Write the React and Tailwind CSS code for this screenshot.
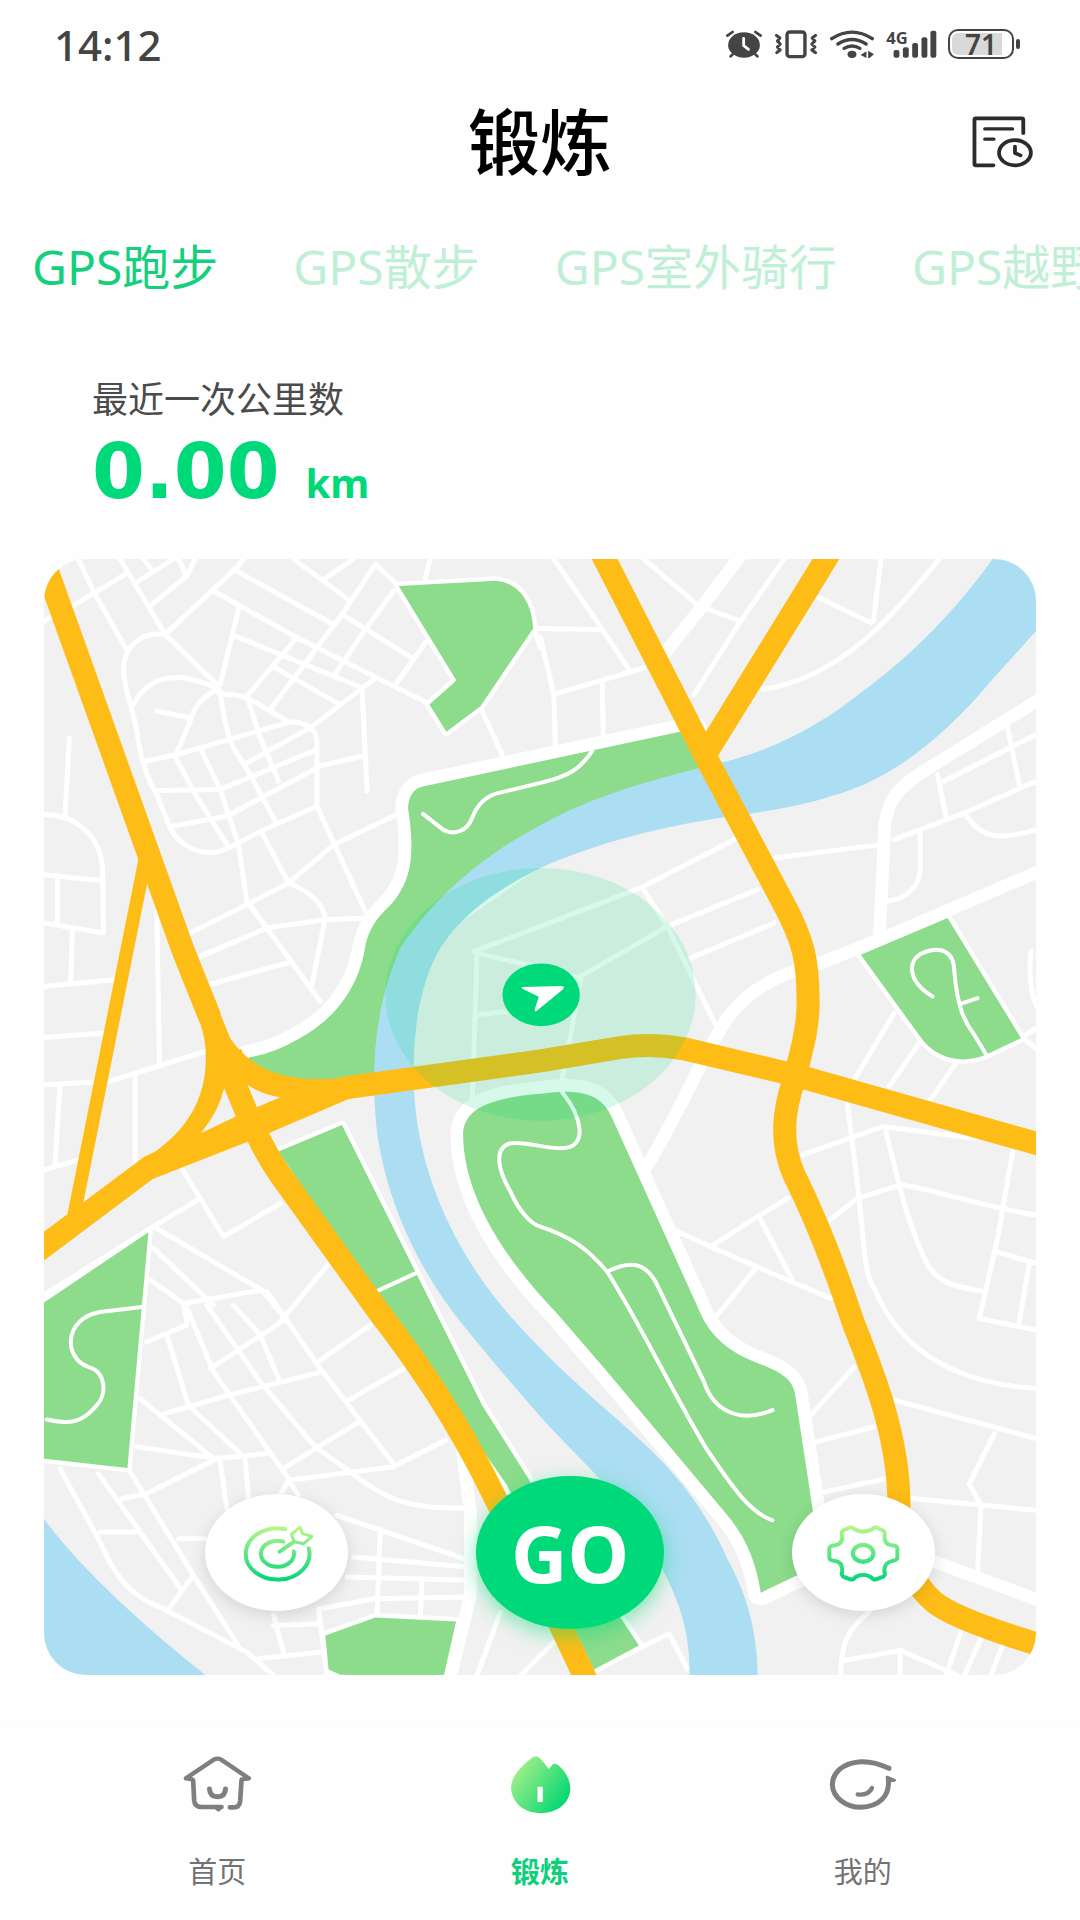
import React, { useState } from "react";

const tabs = ["GPS跑步", "GPS散步", "GPS室外骑行", "GPS越野跑"];

const AlarmIcon = () => (
  <svg className="h-[30px] w-[38px]" viewBox="538 86 110 90" preserveAspectRatio="none" aria-hidden="true">
    <ellipse cx="593" cy="134" rx="46" ry="38" fill="#444" />
    <g fill="none" strokeLinecap="round" strokeWidth="8">
      <path stroke="#fff" d="M592 114V136L606 147" />
      <path stroke="#444" d="M545 106L560 95M626 95L641 106M560 162L554 168M626 162L632 168" />
    </g>
  </svg>
);

const VibrateIcon = () => (
  <svg className="h-[30px] w-11" viewBox="678 86 128 90" preserveAspectRatio="none" fill="none" stroke="#444" aria-hidden="true">
    <rect x="716" y="95" width="52" height="74" rx="8" strokeWidth="10" />
    <path
      strokeWidth="9"
      strokeLinejoin="round"
      strokeLinecap="round"
      d="M685 105L695 113L688 122L696 131L688 140L696 149L686 157M799 105L789 113L797 122L788 131L797 140L788 149L799 157"
    />
  </svg>
);

const WifiIcon = () => (
  <svg className="h-[30px] w-[46px]" viewBox="836 86 134 90" preserveAspectRatio="none" aria-hidden="true">
    <g fill="none" stroke="#444" strokeWidth="10" strokeLinecap="round">
      <path d="M844 115Q903 76 962 115" />
      <path d="M862 131Q903 104 944 131" />
      <path d="M880 144Q903 130 926 144" />
    </g>
    <ellipse cx="903" cy="162" rx="13" ry="11" fill="#444" />
    <path fill="#444" d="M928 164L945 153V173ZM950 151L967 162L954 173H950Z" />
  </svg>
);

const SignalIcon = () => (
  <svg className="h-[34px] w-[51px]" viewBox="1002 80 148 102" preserveAspectRatio="none" fill="#444" aria-hidden="true">
    <text x="1003" y="131" fontSize="48" fontWeight="700" fontFamily="'Noto Sans', sans-serif">
      4G
    </text>
    <rect x="1024" y="149" width="17" height="23" rx="6" />
    <rect x="1051" y="141" width="17" height="31" rx="6" />
    <rect x="1078" y="128" width="17" height="44" rx="6" />
    <rect x="1105" y="111" width="17" height="61" rx="6" />
    <rect x="1131" y="91" width="17" height="81" rx="6" />
  </svg>
);

const HistoryIcon = () => (
  <svg
    className="h-[53px] w-[63px]"
    viewBox="0 0 182 160"
    preserveAspectRatio="none"
    fill="none"
    stroke="#2b2b2b"
    strokeWidth="11"
    strokeLinecap="round"
    strokeLinejoin="round"
    aria-hidden="true"
  >
    <path d="M151 55V14Q151 10 146 10H14Q10 10 10 14V148Q10 152 14 152H65" />
    <path d="M40 42H120M40 73H66" strokeWidth="10" />
    <ellipse cx="127" cy="114" rx="46" ry="38" />
    <path d="M127 95V115L143 122" />
  </svg>
);

const TargetIcon = () => (
  <svg className="h-[60px] w-[73px]" viewBox="610 632 220 180" preserveAspectRatio="none" fill="none" aria-hidden="true">
    <defs>
      <linearGradient id="target" gradientUnits="userSpaceOnUse" x1="0" y1="640" x2="0" y2="806">
        <stop offset="0" stopColor="#bdf78c" />
        <stop offset="1" stopColor="#00d67a" />
      </linearGradient>
    </defs>
    <g stroke="url(#target)" strokeWidth="12" strokeLinecap="round" strokeLinejoin="round">
      <path d="M740 650A96 77 0 1 0 811 708" />
      <path d="M735 688A50 39 0 1 0 766 717" />
      <path d="M723 718L767 688" />
      <path d="M767 688L759 666L785 644L792 664L821 672L796 694Z" strokeWidth="9" />
    </g>
  </svg>
);

const GearIcon = () => (
  <svg className="h-[60px] w-[75px]" viewBox="862 636 226 178" preserveAspectRatio="none" fill="none" aria-hidden="true">
    <defs>
      <linearGradient id="gear" gradientUnits="userSpaceOnUse" x1="0" y1="640" x2="0" y2="808">
        <stop offset="0" stopColor="#bdf78c" />
        <stop offset="1" stopColor="#00d67a" />
      </linearGradient>
    </defs>
    <g stroke="url(#gear)" strokeWidth="12" strokeLinejoin="round">
      <path d="M915 657L935 649Q941 647 948 655Q974 668 1000 655Q1008 646 1015 650L1035 659Q1042 664 1038 675Q1038 700 1060 702Q1077 703 1077 712V738Q1077 746 1060 749Q1036 755 1038 780Q1042 790 1035 795L1012 803Q1004 805 998 797Q974 782 950 797Q944 806 935 803L914 795Q907 790 911 780Q912 752 890 749Q872 746 872 738V712Q872 703 890 702Q912 698 911 675Q906 662 915 657Z" />
      <ellipse cx="974" cy="726" rx="31" ry="25" strokeWidth="13" />
    </g>
  </svg>
);

const HomeIcon = () => (
  <svg
    className="h-[59px] w-[71px]"
    viewBox="125 68 212 177"
    fill="none"
    stroke="#7f7f7f"
    strokeWidth="15"
    strokeLinecap="round"
    strokeLinejoin="round"
    aria-hidden="true"
  >
    <path d="M156 141L136 138L220 82Q231 76 242 82L325 138L304 141" strokeWidth="13" />
    <path d="M158 145L161 205Q163 224 185 224H243" strokeWidth="14" />
    <path d="M228 229L234 233L240 228" strokeWidth="9" />
    <path d="M303 145L299 206Q297 225 280 225H268" strokeWidth="14" />
    <path d="M207 170Q208 193 231 193Q254 193 255 170" />
  </svg>
);

const LeafIcon = () => (
  <svg className="h-[59px] w-[61px]" viewBox="1105 68 184 177" aria-hidden="true">
    <defs>
      <linearGradient id="leaf" x1="0" y1="0.2" x2="0.9" y2="0.8">
        <stop offset="0" stopColor="#aef08a" />
        <stop offset="1" stopColor="#06d873" />
      </linearGradient>
    </defs>
    <path
      fill="url(#leaf)"
      d="M1170 77Q1182 66 1195 77Q1210 92 1222 110L1232 98Q1240 90 1250 98Q1287 130 1287 170C1285 215 1245 243 1197 243C1145 243 1110 210 1108 165C1110 130 1140 100 1170 77Z"
    />
    <rect x="1188" y="163" width="16" height="46" rx="2" fill="#fff" />
  </svg>
);

const FaceIcon = () => (
  <svg
    className="h-[55px] w-[70px]"
    viewBox="620 72 210 165"
    fill="none"
    stroke="#7f7f7f"
    strokeWidth="15"
    strokeLinecap="round"
    strokeLinejoin="round"
    aria-hidden="true"
  >
    <path d="M803 106C770 90 742 85 718 86C662 90 633 120 633 156C635 195 675 223 718 223C772 221 806 190 801 140" />
    <path d="M797 132L820 142L802 144Z" strokeWidth="8" fill="#7f7f7f" />
    <path d="M709 184C732 187 745 180 752 165" strokeWidth="13" />
  </svg>
);

const CityMap = () => (
  <svg className="block h-full w-full" viewBox="12 24 2973 3345" preserveAspectRatio="none" fill="none" role="img" aria-label="地图">
    <rect x="12" y="24" width="2973" height="3345" fill="#f1f1f1" />

    {/* minor streets, one group per district */}
    <g stroke="#fff" strokeWidth="15" strokeLinejoin="round" strokeLinecap="round">
      <g>
        <path d="M115 24L165 130L262 300M12 210L105 160L255 70M240 24L375 250L535 405M375 250L590 50L610 24" />
        <path d="M375 250C300 240 250 290 250 360C255 420 280 480 290 540C300 620 320 680 350 730L390 830C420 890 480 908 530 902C580 890 620 860 660 840L830 765" />
        <path d="M330 165L440 75L465 24M415 24L440 75M295 90L400 24M310 24L330 50M580 55L870 215M520 120L770 260L1060 405L1170 460" />
        <path d="M595 175L540 400M585 255L720 310L965 410M760 24L930 150M850 85L940 24M1005 40L905 190L830 290L690 475" />
        <path d="M1005 40L1075 105M1060 120L975 235L880 375M905 190L1115 320M1155 275L1070 395M770 260L620 435M705 350L890 455" />
        <path d="M280 460C310 400 360 375 430 380C480 390 510 400 535 415C490 430 460 470 450 510C430 560 415 590 405 615M350 480L450 500" />
        <path d="M535 425L560 430C600 430 620 440 640 450L740 510M540 420C550 500 565 560 580 590L630 670L705 810M625 450L660 560L715 690" />
        <path d="M315 630L410 610L740 515C780 505 830 530 830 570V765L975 1080M1000 385L810 530L620 635M830 595L540 715L355 718M830 650L560 795L395 825" />
        <path d="M405 615L460 720L560 880M485 600L540 715L595 880L620 1050L680 1130L840 1350M835 645L965 615M965 410L975 610L980 720" />
        <path d="M665 845L745 995C830 1030 850 1070 855 1100L815 1300M1070 790L880 880L745 995L620 1060L450 1145M975 1100L855 1105L680 1130L480 1215" />
        <path d="M88 560L75 795M12 790C100 790 190 850 188 970L190 1145L12 1115M12 970L188 988M52 975V1120M97 1140L92 1290M1170 24L1155 80M1325 480L1385 610M1480 230L1500 290" />
      </g>
      <g transform="translate(1500 0)">
        <path d="M-20 232L175 235M40 24L175 220L265 355M0 260L40 430L45 590M40 430L310 350M185 390L188 550M310 24L475 165L600 210" />
        <path d="M730 24L600 210L460 430M835 140L990 215M1020 24L998 210M1195 24C1050 200 900 380 665 415" />
        <path d="M600 855L310 1005L0 1125L-200 1200M305 1010L380 1125L530 1430M650 1015L380 1125L120 1275M700 1115L450 1220M700 920L1020 880" />
        <path d="M1485 550L1210 690M1400 530L1435 700M1190 670L1215 795M1485 690L1270 785L1060 865M1270 785C1320 860 1370 870 1485 835M1138 840V960C1130 1010 1100 1040 1040 1050" />
      </g>
      <g transform="translate(0 1200)">
        <path d="M12 105L220 85M12 258L185 245M12 400L205 390L495 300M60 405L45 640M12 655L115 625M285 370V640M350 -120L358 335M505 100L740 35M470 20L545 -12" />
        <path d="M425 650L480 740L550 855L720 755M480 740L340 825L12 1030M340 825L665 1015L740 1105M430 1055L665 1015M340 890L520 1060M330 985L430 1055L440 1110M720 1110L870 930" />
        <path d="M1310 0L1295 460M1310 190L1400 180M1310 5L1500 50L1620 80" />
      </g>
      <g transform="translate(1500 1200)">
        <path d="M1060 185L940 385M1135 275L1045 405M1245 335L1165 450M1440 260L1485 230M1445 260L1485 290M1470 0Q1460 100 1485 160M120 80L100 200L65 380" />
        <path d="M920 455L955 740C970 880 970 970 1000 1010C1080 1200 1250 1295 1485 1310M785 610L1025 525L1300 560M1035 540L1080 720C1110 830 1140 900 1160 940C1200 1000 1250 1005 1320 1018" />
        <path d="M860 810L950 740L1080 700C1150 705 1300 760 1485 790M1415 600L1370 860L1315 1100L1485 1135M1365 900L1485 935M1465 935L1435 1110" />
        <path d="M400 835L510 885L740 985L870 1040M510 885L650 795L740 740M655 795L755 985M640 955L530 1090" />
      </g>
      <g transform="translate(0 2280)">
        <path d="M320 90L440 40M380 70L445 280M435 -25L520 180L745 500M510 170L740 20M500 -20L660 210L825 405L930 480C1030 560 1100 592 1270 588" />
        <path d="M580 -20L660 70L715 200M375 305L565 250L845 180M680 -60L840 170L1055 450M840 145L990 40M925 265L1090 170M955 330L730 470M745 505L1055 465L1215 385" />
        <path d="M300 260L520 440M455 290L600 425M290 405L530 440L680 425M530 440L320 545L245 560M540 450L560 590M615 445L625 560" />
        <path d="M60 470L180 690C220 780 260 850 370 890L620 1020L700 1090M270 480L320 560L460 790L600 1010M175 485L300 660L425 835M180 660H300M415 680H495M460 790L390 885M745 505L720 550M745 505L775 550" />
        <path d="M890 610L1270 740M940 735L1280 765M920 795L1280 805M1020 650L1010 910M1145 800L1140 910M840 890L1000 860L1280 855M700 910L730 1020M700 940L840 935M655 1040L845 1020M835 890L860 1090" />
        <path d="M1380 900L1310 1090M1540 990L1440 1090" />
      </g>
      <g transform="translate(1500 2280)">
        <path d="M940 165L810 310M825 390L1000 345M830 545L1035 500M1060 265L1485 380M1360 365L1285 515L1320 580L1310 780M1115 560L1485 595" />
        <path d="M985 900C920 950 900 1000 900 1090M910 1045L1080 1015L1250 1090M1078 1015V1090M1260 960L1215 1090M1320 980L1270 1090M1385 1000L1350 1090M160 1075L385 965L440 1070" />
      </g>
    </g>

    {/* avenues */}
    <g stroke="#fff" strokeWidth="38" strokeLinejoin="round">
      <path d="M2110 0L1985 165L1870 310" />
      <path d="M2995 445L2680 640C2580 700 2530 740 2530 860L2515 1170" />
      <path d="M2995 960L2515 1165L2340 1235C2200 1270 2120 1320 2060 1400C1980 1520 1920 1680 1815 1850" />
      <path d="M1265 2690L1290 2880V3130L1230 3375" />
      <path d="M2670 3025L2995 3145" />
    </g>

    {/* parks */}
    <g fill="#8cdc8c" stroke="#fff" strokeWidth="26" strokeLinejoin="round" style={{ paintOrder: "stroke" }}>
      <path d="M1075 105L1365 89C1440 95 1475 160 1478 232L1320 465L1218 542L1167 460L1248 388Z" />
      <path d="M715 1800L905 1720L1125 2160L1190 2290L1325 2560L1470 2790L1795 3280L1660 3352L1400 2800L1050 2300Z" />
      <path d="M325 2042L0 2260V2719L262 2748Z" />
      <path d="M855 3250L1005 3196L1247 3208L1210 3372L900 3368L865 3352Z" />
      <path d="M2460 1210L2720 1100L2940 1460L2835 1510C2760 1540 2690 1520 2645 1465Z" />
      <path
        strokeWidth="76"
        d="M1960 533L1150 705Q1105 715 1103 770C1115 850 1125 950 1080 1020C1050 1080 990 1090 972 1200C955 1290 900 1400 760 1470Q700 1505 625 1518L640 1570L880 1600L1060 1570L1140 1150L1560 860L2000 660Z"
      />
    </g>

    {/* river */}
    <g fill="#abdef2">
      <path d="M2855 24C2720 210 2590 330 2450 432C2340 520 2190 600 2045 633C1850 680 1650 735 1500 822C1330 910 1180 1040 1080 1190C1000 1370 990 1560 1010 1740C1040 1960 1140 2160 1260 2310C1340 2410 1410 2490 1500 2595C1640 2750 1800 2880 1870 3060C1930 3180 1947 3260 1947 3372H2151C2150 3240 2120 3130 2060 3020C1960 2800 1840 2700 1710 2585C1600 2490 1500 2395 1425 2310C1260 2130 1130 1880 1120 1600C1115 1440 1140 1290 1200 1190C1270 1080 1380 1010 1500 950C1680 870 1870 825 2050 798C2180 780 2280 765 2370 735C2540 690 2700 570 2850 390L2985 240V24Z" />
      <path d="M12 2900C120 3050 320 3230 500 3372H12Z" />
    </g>

    <path
      fill="#8cdc8c"
      stroke="#fff"
      strokeWidth="76"
      strokeLinejoin="round"
      style={{ paintOrder: "stroke" }}
      d="M1268 1750C1268 1680 1330 1640 1500 1627C1640 1605 1690 1640 1715 1700L1975 2275C2010 2360 2070 2400 2140 2430C2220 2460 2260 2480 2265 2540L2320 2900L2290 3060L2160 3122C2145 3020 2110 2950 2060 2890L1700 2460L1545 2280C1430 2160 1270 1960 1268 1750Z"
    />

    {/* footpaths */}
    <g stroke="#fff" strokeWidth="12" strokeLinecap="round">
      <path d="M1148 788L1205 833C1240 855 1280 840 1295 800C1310 760 1335 735 1375 725L1500 695C1590 675 1620 650 1655 600" />
      <path d="M1565 1622C1620 1690 1650 1790 1560 1790C1510 1790 1460 1770 1410 1775C1360 1790 1370 1850 1410 1920C1440 1990 1480 2020 1500 2025C1590 2055 1640 2090 1700 2160C1790 2300 1900 2530 2000 2695C2060 2780 2120 2880 2195 2905" />
      <path d="M1700 2160C1780 2120 1820 2140 1850 2200L1990 2490C2020 2580 2100 2615 2195 2575" />
      <path d="M1010 2218L1125 2165M305 2266L180 2281C70 2300 70 2420 145 2445C200 2460 200 2530 170 2560C130 2610 90 2620 20 2603" />
      <path d="M2675 1335C2600 1290 2600 1230 2640 1207C2700 1180 2740 1200 2740 1260C2750 1370 2770 1410 2800 1450L2835 1508M2765 1355L2810 1340" />
    </g>

    {/* main roads */}
    <g stroke="#febc16" strokeWidth="69" strokeLinejoin="round">
      <path d="M-20 -57L430 1200L510 1400" />
      <path d="M-10 2100L330 1845L600 1720C700 1680 830 1622 930 1607L1500 1528L1740 1488Q1830 1475 1930 1492L2260 1570L2995 1778" />
      <path d="M570 1500C600 1640 650 1770 720 1870L1015 2280C1130 2430 1250 2600 1370 2850L1565 3230L1640 3390" />
      <path d="M322 890L260 1200L102 1990" strokeWidth="40" />
      <path d="M1680 0L2010 645L2225 1050C2290 1170 2302 1230 2302 1350C2302 1440 2280 1500 2262 1580C2225 1680 2220 1780 2260 1870C2340 2030 2400 2200 2440 2320C2500 2470 2570 2650 2574 2840C2575 3000 2600 3080 2680 3150Q2740 3200 2995 3278" />
      <path d="M2370 0L2315 90L1994 610" />
    </g>
    <path
      fill="#febc16"
      d="M465 1200L570 1460Q610 1520 680 1555Q760 1590 880 1582L930 1640L650 1760L330 1885L12 2125V2042L300 1830C400 1770 497 1680 497 1520C497 1440 480 1410 395 1200Z"
    />
    <path fill="#f1f1f1" d="M622 1600Q665 1630 720 1637L650 1667ZM552 1610L587 1695L482 1745Q535 1680 552 1610Z" />

    {/* current location */}
    <ellipse cx="1500" cy="1329" rx="465" ry="379" fill="#00d97a" fillOpacity="0.16" />
    <ellipse cx="1502" cy="1330" rx="116" ry="94" fill="#00d97a" />
    <path fill="#fff" d="M1446 1307L1563 1304Q1576 1306 1566 1315L1490 1377Q1480 1385 1484 1370L1495 1336L1447 1313Q1441 1309 1446 1307Z" />
  </svg>
);

const NavItem = ({ icon, label, active }) => (
  <a href="#" aria-current={active ? "page" : undefined} className="flex flex-1 flex-col items-center gap-9">
    <span className="flex h-16 items-center">{icon}</span>
    <span className={`text-[29px] leading-10 ${active ? "font-bold text-[#0fcf7c]" : "text-[#737373]"}`}>{label}</span>
  </a>
);

const App = () => {
  const [activeTab, setActiveTab] = useState(0);

  return (
    <div className="flex min-h-screen w-full flex-col overflow-hidden bg-[#fefefe] font-['Noto_Sans','Noto_Sans_CJK_SC',sans-serif]">
      <div className="flex h-[88px] items-center justify-between pl-[54px] pr-[60px] text-[#444]">
        <span className="text-[42px] font-medium">14:12</span>
        <div className="flex items-center gap-[11px]">
          <AlarmIcon />
          <VibrateIcon />
          <WifiIcon />
          <SignalIcon />
          <div className="flex items-center gap-[2px]">
            <div className="h-[30px] w-[66px] rounded-[10px] border-2 border-[#444] p-[2px]">
              <div className="flex h-full w-[50px] items-center justify-center rounded-l-md bg-[#d9d9d9] pl-2 text-[28px] font-semibold leading-none">
                71
              </div>
            </div>
            <div className="h-[10px] w-1 rounded-sm bg-[#444]" />
          </div>
        </div>
      </div>

      <header className="grid h-[106px] grid-cols-[1fr_auto_1fr] items-center px-[46px]">
        <h1 className="col-start-2 text-[72px] font-medium leading-none text-black">锻炼</h1>
        <button className="justify-self-end" aria-label="运动记录">
          <HistoryIcon />
        </button>
      </header>

      <div role="tablist" className="mt-[38px] flex h-[70px] items-center gap-[75px] overflow-hidden whitespace-nowrap pl-8">
        {tabs.map((tab, i) => (
          <button
            key={tab}
            role="tab"
            aria-selected={i === activeTab}
            onClick={() => setActiveTab(i)}
            className={`shrink-0 text-[48px] leading-none ${i === activeTab ? "text-[#14cf7c]" : "text-[#bff0d6]"}`}
          >
            {tab}
          </button>
        ))}
      </div>

      <section className="mt-[74px] px-[92px]">
        <p className="text-[36px] leading-[48px] text-[#4b4b4b]">最近一次公里数</p>
        <p className="mt-3 flex items-baseline gap-[26px] font-bold leading-[72px] text-[#00d97a]">
          <span className="font-['DejaVu_Sans',sans-serif] text-[76px]">0.00</span>
          <span className="text-[40px]">km</span>
        </p>
      </section>

      <main className="relative mx-11 mt-10 aspect-[991/1115] overflow-hidden rounded-[42px]">
        <CityMap />
        <div className="absolute inset-x-0 bottom-[46px] flex items-center justify-between pl-[161px] pr-[101px]">
          <button
            aria-label="目标"
            className="flex h-[117px] w-[143px] items-center justify-center rounded-[50%] bg-white pl-1 shadow-[0_4px_16px_rgba(0,0,0,0.12)]"
          >
            <TargetIcon />
          </button>
          <button className="h-[153px] w-[188px] rounded-[50%] bg-[#00d97a] text-[78px] font-bold leading-none text-white shadow-[0_6px_20px_rgba(0,217,122,0.5)]">
            GO
          </button>
          <button
            aria-label="设置"
            className="flex h-[117px] w-[143px] items-center justify-center rounded-[50%] bg-white shadow-[0_4px_16px_rgba(0,0,0,0.12)]"
          >
            <GearIcon />
          </button>
        </div>
      </main>

      <nav className="mt-[48px] flex h-[198px] border-t border-[#fafafa] px-14 pt-7">
        <NavItem icon={<HomeIcon />} label="首页" />
        <NavItem icon={<LeafIcon />} label="锻炼" active />
        <NavItem icon={<FaceIcon />} label="我的" />
      </nav>
    </div>
  );
};

export default App;
